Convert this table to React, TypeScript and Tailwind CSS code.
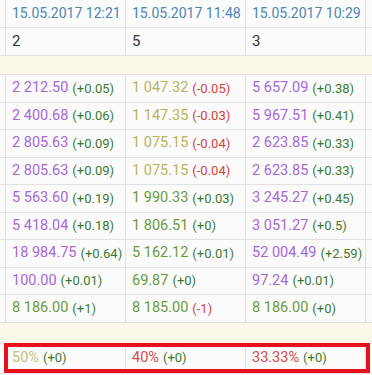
const HEADERS = ['15.05.2017 12:21', '15.05.2017 11:48', '15.05.2017 10:29'];
const COUNTS = ['2', '5', '3'];

type Cell = { v: string; d: string; c: string };

const PURPLE = 'text-[#a867d6]';
const OLIVE = 'text-[#b9b35e]';
const GREEN = 'text-[#6c9a3b]';

const ROWS: Cell[][] = [
  [
    { v: '2 212.50', d: '+0.05', c: PURPLE },
    { v: '1 047.32', d: '-0.05', c: OLIVE },
    { v: '5 657.09', d: '+0.38', c: PURPLE },
  ],
  [
    { v: '2 400.68', d: '+0.06', c: PURPLE },
    { v: '1 147.35', d: '-0.03', c: OLIVE },
    { v: '5 967.51', d: '+0.41', c: PURPLE },
  ],
  [
    { v: '2 805.63', d: '+0.09', c: PURPLE },
    { v: '1 075.15', d: '-0.04', c: OLIVE },
    { v: '2 623.85', d: '+0.33', c: PURPLE },
  ],
  [
    { v: '2 805.63', d: '+0.09', c: PURPLE },
    { v: '1 075.15', d: '-0.04', c: OLIVE },
    { v: '2 623.85', d: '+0.33', c: PURPLE },
  ],
  [
    { v: '5 563.60', d: '+0.19', c: PURPLE },
    { v: '1 990.33', d: '+0.03', c: GREEN },
    { v: '3 245.27', d: '+0.45', c: PURPLE },
  ],
  [
    { v: '5 418.04', d: '+0.18', c: PURPLE },
    { v: '1 806.51', d: '+0', c: GREEN },
    { v: '3 051.27', d: '+0.5', c: PURPLE },
  ],
  [
    { v: '18 984.75', d: '+0.64', c: PURPLE },
    { v: '5 162.12', d: '+0.01', c: GREEN },
    { v: '52 004.49', d: '+2.59', c: PURPLE },
  ],
  [
    { v: '100.00', d: '+0.01', c: PURPLE },
    { v: '69.87', d: '+0', c: GREEN },
    { v: '97.24', d: '+0.01', c: PURPLE },
  ],
  [
    { v: '8 186.00', d: '+1', c: GREEN },
    { v: '8 185.00', d: '-1', c: GREEN },
    { v: '8 186.00', d: '+0', c: GREEN },
  ],
];

const LAST: Cell[] = [
  { v: '50%', d: '+0', c: 'text-[#c5c27c]' },
  { v: '40%', d: '+0', c: 'text-[#d94848]' },
  { v: '33.33%', d: '+0', c: 'text-[#d94848]' },
];

function Delta({ d }: { d: string }) {
  const neg = d.startsWith('-');
  return (
    <span className={`ml-1 text-[13px] ${neg ? 'text-[#d4443c]' : 'text-[#3b7a30]'}`}>({d})</span>
  );
}

function Row({ children, h = 'h-[28px]' }: { children: React.ReactNode; h?: string }) {
  return (
    <div className={`grid grid-cols-[6px_120px_120px_120px_6px] ${h} border-b border-[#e2e2e2]`}>
      <div className="border-r border-[#e2e2e2]" />
      {children}
      <div />
    </div>
  );
}

function Band({ h }: { h: string }) {
  return <div className={`${h} bg-[#fcf8ea] border-b border-[#e8e4d6]`} />;
}

export default function App() {
  return (
    <div className="relative w-[372px] h-[375px] overflow-hidden bg-[#fbfbfb] font-['Roboto',sans-serif]">
      <Row>
        {HEADERS.map((h) => (
          <div key={h} className="border-r border-[#e2e2e2] pl-[6px] flex items-center text-[14px] text-[#4d86b3]">
            {h}
          </div>
        ))}
      </Row>
      <Row>
        {COUNTS.map((c, i) => (
          <div key={i} className="border-r border-[#e2e2e2] pl-[6px] flex items-center text-[15px] text-[#333]">
            {c}
          </div>
        ))}
      </Row>
      <Band h="h-[19px]" />
      {ROWS.map((r, i) => (
        <Row key={i} h="h-[27.5px]">
          {r.map((c, j) => (
            <div key={j} className="border-r border-[#e2e2e2] pl-[6px] flex items-center whitespace-nowrap">
              <span className={`text-[14.5px] ${c.c}`}>{c.v}</span>
              <Delta d={c.d} />
            </div>
          ))}
        </Row>
      ))}
      <Band h="h-[21px]" />
      <Row h="h-[30px]">
        {LAST.map((c, j) => (
          <div key={j} className="border-r border-[#e2e2e2] pl-[6px] flex items-center whitespace-nowrap">
            <span className={`text-[14.5px] ${c.c}`}>{c.v}</span>
            <Delta d={c.d} />
          </div>
        ))}
      </Row>
      <div className="absolute left-[4px] top-[343px] w-[366px] h-[30px] border-[4px] border-[#e8101c]" />
    </div>
  );
}
